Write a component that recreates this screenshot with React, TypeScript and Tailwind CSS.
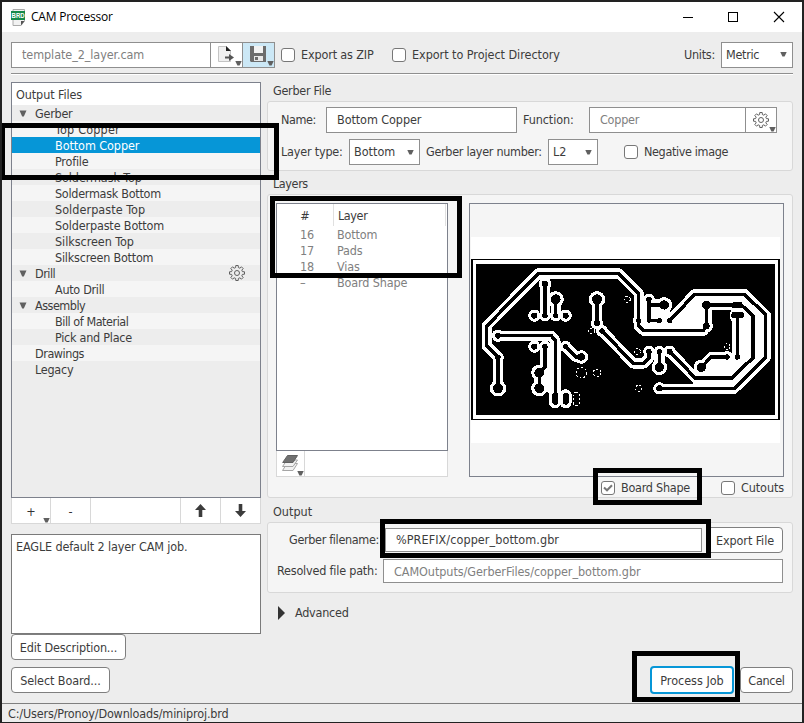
import React from "react";

const FONT = "font-['DejaVu_Sans_Condensed','DejaVu_Sans',sans-serif] [font-stretch:condensed]";

function Down({ className = "" }: { className?: string }) {
  return (
    <svg className={className} width="7" height="5" viewBox="0 0 7 5">
      <path d="M0.3 0H6.7L4.6 4.6H2.4Z" fill="#606060" />
    </svg>
  );
}

function Gear() {
  const pts: string[] = [];
  const teeth = 8;
  for (let i = 0; i < teeth; i++) {
    const a = (i * 2 * Math.PI) / teeth;
    const corners: [number, number][] = [[-0.25, 5.6], [-0.16, 7.6], [0.16, 7.6], [0.25, 5.6]];
    for (const [d, r] of corners) {
      pts.push(`${(8 + r * Math.sin(a + d)).toFixed(2)},${(8 - r * Math.cos(a + d)).toFixed(2)}`);
    }
  }
  return (
    <svg width="16" height="16" viewBox="0 0 16 16" fill="none" stroke="#606060" strokeWidth="1">
      <polygon points={pts.join(" ")} />
      <circle cx="8" cy="8" r="2.5" />
    </svg>
  );
}

function Check({ label, checked = false, tracking = "" }: { label: string; checked?: boolean; tracking?: string }) {
  return (
    <div className="flex items-center gap-[6px]">
      <div className="flex h-[14px] w-[14px] items-center justify-center rounded-[3px] border border-[#777] bg-white">
        {checked && (
          <svg width="10" height="8" viewBox="0 0 10 8">
            <path d="M1 3.5L4 6.3L9 1.2" fill="none" stroke="#777" strokeWidth="2" />
          </svg>
        )}
      </div>
      <span className={tracking}>{label}</span>
    </div>
  );
}

function Select({ value, width }: { value: string; width: string }) {
  return (
    <div className={`flex h-[26px] items-center justify-between border border-[#8f8f8f] bg-white pr-[5px] pl-1 ${width}`}>
      <span>{value}</span>
      <Down />
    </div>
  );
}

function Triangle() {
  return (
    <svg width="8" height="7" viewBox="0 0 8 7">
      <path d="M0.5 0.5H7.5L4.8 6.5H3.2Z" fill="#606060" />
    </svg>
  );
}

type Row = { t: string; k?: string; head?: boolean; sel?: boolean; gear?: boolean; flat?: boolean };

const rows: Row[] = [
  { t: "Gerber", head: true, k: "tracking-[-0.25px]" },
  { t: "Top Copper", k: "tracking-[0.2px]" },
  { t: "Bottom Copper", sel: true, k: "tracking-[-0.08px]" },
  { t: "Profile", k: "tracking-[-0.2px]" },
  { t: "Soldermask Top", k: "tracking-[-0.1px]" },
  { t: "Soldermask Bottom", k: "tracking-[-0.28px]" },
  { t: "Solderpaste Top", k: "tracking-[0.05px]" },
  { t: "Solderpaste Bottom", k: "tracking-[-0.15px]" },
  { t: "Silkscreen Top", k: "tracking-[-0.05px]" },
  { t: "Silkscreen Bottom", k: "tracking-[-0.22px]" },
  { t: "Drill", head: true, gear: true, k: "tracking-[-0.5px]" },
  { t: "Auto Drill", k: "tracking-[-0.3px]" },
  { t: "Assembly", head: true, k: "tracking-[-0.5px]" },
  { t: "Bill of Material", k: "tracking-[-0.46px]" },
  { t: "Pick and Place", k: "tracking-[-0.26px]" },
  { t: "Drawings", flat: true, k: "tracking-[-0.45px]" },
  { t: "Legacy", flat: true, k: "tracking-[-0.25px]" },
];

function Tree() {
  return (
    <div className="h-[416px] w-[250px] border border-[#7d818c] bg-[#ededed]">
      <div className="flex h-[22px] items-center bg-white pt-[2px] pl-[4px] tracking-[-0.1px]">Output Files</div>
      {rows.map((r, i) => (
        <div
          key={r.t}
          className={`flex h-4 items-center ${r.sel ? "bg-[#0696d7] text-white" : i % 2 ? "bg-[#f5f5f5]" : "bg-[#ededed]"} ${r.head ? "pl-[7px]" : r.flat ? "pl-[23px]" : "pl-[43px]"}`}
        >
          {r.head && <span className="w-4"><Triangle /></span>}
          <span className={`relative top-px ${r.k ?? ""}`}>{r.t}</span>
          {r.gear && <span className="mr-[15px] ml-auto"><Gear /></span>}
        </div>
      ))}
    </div>
  );
}

const traces = [
  "M102 565V470L68 438V378L224 220H464L524 280V378L540 392H718L727 378V315H832L867 347V473L804 534H694L617 455",
  "M617 362L692 283H842L905 345V473L810 566H586",
  "M102 407H262L274 422V600",
  "M243 250V347",
  "M275 298V347",
  "M243 440V500L226 518V565",
  "M305 440L336 471H352",
  "M399 298V372",
  "M414 393L508 490H540L555 474V455",
  "M586 455V500",
  "M555 298V362H586",
  "M555 315H600",
  "M712 502L742 471H789",
  "M820 347V471",
];

const pads: [number, number, number][] = [
  [102, 565, 15], [102, 407, 9], [102, 472, 8], [243, 252, 10], [275, 298, 15], [211, 347, 9],
  [243, 347, 8], [275, 347, 8], [305, 347, 9], [211, 440, 9], [243, 440, 8], [305, 440, 8],
  [352, 471, 11], [226, 518, 15], [226, 565, 15], [399, 298, 15], [399, 370, 9], [414, 393, 8],
  [524, 362, 8], [555, 298, 8], [601, 315, 14], [555, 362, 7], [586, 362, 8], [617, 362, 8],
  [727, 315, 13], [727, 378, 10], [555, 455, 8], [586, 455, 8], [617, 455, 9], [586, 502, 14],
  [586, 565, 9], [712, 502, 14], [789, 471, 8], [820, 471, 8],
];

const vias: [number, number, number][] = [
  [352, 518, 16], [399, 518, 11], [524, 565, 10], [520, 455, 9], [789, 440, 9], [383, 393, 9], [490, 298, 9],
];

function Board() {
  return (
    <svg width="309" height="206" viewBox="21 111 927 618" className="block" shapeRendering="crispEdges">
      <rect x="21" y="111" width="927" height="618" fill="#fff" />
      <rect x="21" y="177" width="927" height="483" fill="#000" />
      <rect x="27" y="180" width="915" height="477" fill="#fff" />
      <rect x="36" y="192" width="897" height="453" fill="#000" />
      <path d="M617 362L692 283H842L905 345V473L810 566H700L617 455L555 392H524V298H600L620 340Z" fill="#fff" />
      <path d="M540 405H720L742 388V330H800V350L808 362V460H740L705 490L698 510L685 512L630 450H550Z" fill="#000" />
      <path d="M640 284L612 298L628 325L640 325L680 284Z" fill="#000" />
      <path d="M243 440H275V600L245 570L226 565L243 500Z" fill="#fff" />
      <path d="M708 502L742 475H867V534H700Z" fill="#fff" />
      <g fill="none" stroke="#fff" strokeWidth="31" strokeLinejoin="round">
        {traces.map((d) => <path key={d} d={d} />)}
      </g>
      {pads.map(([x, y, r]) => <circle key={`${x}-${y}`} cx={x} cy={y} r={r + 9.5} fill="#fff" />)}
      <rect x="255" y="570" width="36" height="55" rx="17" fill="#fff" />
      <rect x="287" y="568" width="36" height="57" rx="17" fill="#fff" />
      <rect x="797" y="327" width="46" height="40" rx="18" fill="#fff" />
      <g fill="none" stroke="#000" strokeWidth="10.5">
        {traces.map((d) => <path key={d} d={d} />)}
      </g>
      {pads.map(([x, y, r]) => <circle key={`${x}-${y}`} cx={x} cy={y} r={r} fill="#000" />)}
      <rect x="265" y="577" width="18" height="37" rx="8" fill="#000" />
      <rect x="297" y="578" width="17" height="36" rx="8" fill="#000" />
      <rect x="802" y="336" width="38" height="19" rx="9" fill="#000" />
      <rect x="803" y="307" width="33" height="17" rx="5" fill="#000" />
      <g fill="none" stroke="#fff" strokeWidth="3" strokeDasharray="6 6">
        {vias.map(([x, y, r]) => <circle key={`${x}-${y}`} cx={x} cy={y} r={r} />)}
        <rect x="327" y="577" width="20" height="39" rx="9" />
      </g>
    </svg>
  );
}

const btn = "flex h-[26px] items-center justify-center rounded-[4px] border border-[#7f7f7f] bg-white pt-px";
const field = "flex items-center border border-[#8f8f8f] bg-white pl-[10px]";
const group = "rounded-[3px] border border-[#d8d8d8] bg-[#f5f5f5]";

export default function App() {
  return (
    <div className={`relative flex h-[723px] w-[804px] flex-col overflow-hidden border-2 border-b border-[#222] bg-[#ededed] text-[12.5px] leading-4 whitespace-nowrap text-[#3c3c3c] ${FONT}`}>
      <div className="flex h-[30px] shrink-0 items-center bg-white pr-[16px] pl-[9px] text-black">
        <svg width="15" height="17" viewBox="0 0 15 17">
          <path d="M2 .5H13.5V12L10 16.5H2Z" fill="#f2f2f2" stroke="#aaa" />
          <path d="M13.5 12L10 16.5V12Z" fill="#555" />
          <rect y="2" width="14" height="9" fill="#168a4a" />
          <text x="0.6" y="9" fontSize="7" fontWeight="700" fill="#fff" textLength="13" lengthAdjust="spacingAndGlyphs" fontFamily="Liberation Sans, sans-serif">BRD</text>
        </svg>
        <span className="ml-[5px] font-['Open_Sans',sans-serif] text-[12px] tracking-[-0.22px] [font-stretch:normal]">CAM Processor</span>
        <svg className="ml-auto" width="103" height="12" viewBox="0 0 103 12" fill="none" stroke="#000">
          <path d="M0 6.5H10" />
          <rect x="45.5" y="1.5" width="9" height="9" />
          <path d="M91 1L101 11M101 1L91 11" strokeWidth="1.1" />
        </svg>
      </div>

      <div className="flex h-[41px] shrink-0 items-center px-[9px] pt-1">
        <div className="flex h-[26px] w-[264px] border border-[#8f8f8f] bg-white">
          <div className="flex w-[199px] items-center border-r border-[#8f8f8f] pl-[10px] tracking-[-0.08px] text-[#808080]">template_2_layer.cam</div>
          <div className="relative w-[32px] border-r border-[#8f8f8f]">
            <svg className="absolute top-[3px] left-[7px]" width="17" height="17" viewBox="0 0 17 17">
              <path d="M.5 .5H8.5L12.5 4.5V15.5H.5Z" fill="#f0f0f0" stroke="#c4c4c4" />
              <path d="M8 0L13 5H8Z" fill="#222" />
              <path d="M7 11.5H12" stroke="#555" strokeWidth="2" />
              <path d="M11 8L16 11.5L11 15Z" fill="#555" />
            </svg>
            <Down className="absolute right-0 bottom-px" />
          </div>
          <div className="relative flex-1 bg-[#cce8f6]">
            <svg className="absolute top-[3px] left-[7px]" width="16" height="16" viewBox="0 0 16 16">
              <path d="M0 0H16V16H1L0 15Z" fill="#6c6c6c" />
              <rect x="4" y="0" width="9" height="7" fill="#f2f2f2" />
              <rect x="4" y="10" width="9" height="5" fill="#e8e8e8" />
              <rect x="5" y="11" width="3" height="3" fill="#6c6c6c" />
            </svg>
            <Down className="absolute right-0 bottom-px" />
          </div>
        </div>
        <div className="ml-[6px] w-[93px]"><Check label="Export as ZIP" tracking="tracking-[-0.15px]" /></div>
        <div className="ml-[18px]"><Check label="Export to Project Directory" tracking="tracking-[-0.04px]" /></div>
        <span className="mr-[6px] ml-auto tracking-[-0.25px]">Units:</span>
        <Select value="Metric" width="w-[72px] tracking-[-0.3px]" />
      </div>
      <div className="mx-[9px] h-[2px] shrink-0 border-b border-white bg-[#8f8f8f]" />

      <div className="flex flex-1 px-[9px]">
        <div className="mt-[7px] flex w-[250px] flex-col items-start">
          <Tree />
          <div className="flex h-[26px] w-[250px] border border-t-0 border-[#d8d8d8] bg-white text-[#333]">
            <div className="relative flex w-[39px] items-center justify-center border-r border-[#d8d8d8] pt-[2px]">+<Down className="absolute right-0 bottom-0" /></div>
            <div className="flex w-[40px] items-center justify-center border-r border-[#d8d8d8] pt-[2px]">-</div>
            <div className="flex-1" />
            <div className="flex w-[41px] items-center justify-center border-x border-[#d8d8d8]">
              <svg width="11" height="13" viewBox="0 0 11 13"><path d="M5.5 0L11 6H7.3V13H3.7V6H0Z" fill="#3c3c3c" /></svg>
            </div>
            <div className="flex w-[39px] items-center justify-center">
              <svg width="11" height="13" viewBox="0 0 11 13"><path d="M5.5 13L11 7H7.3V0H3.7V7H0Z" fill="#3c3c3c" /></svg>
            </div>
          </div>
          <div className="mt-[10px] h-[100px] w-[250px] border border-[#7a7a7a] bg-white pt-[4px] pl-[4px] tracking-[-0.13px]">EAGLE default 2 layer CAM job.</div>
          <div className={`${btn} w-[115px] tracking-[-0.15px]`}>Edit Description...</div>
          <div className={`${btn} mt-[7px] w-[99px] tracking-[-0.1px]`}>Select Board...</div>
        </div>

        <div className="ml-[6px] flex w-[526px] flex-col pt-[7px]">
          <div className="h-[19px] pt-px pl-[6px] tracking-[-0.28px]">Gerber File</div>
          <div className={`${group} h-[70px] pt-[5px] pl-[13px]`}>
            <div className="flex items-center">
              <span className="w-[45px] tracking-[-0.4px]">Name:</span>
              <div className={`${field} h-[26px] w-[191px] tracking-[-0.08px]`}>Bottom Copper</div>
              <span className="ml-[6px] w-[66px] tracking-[-0.1px]">Function:</span>
              <div className={`${field} h-[26px] w-[188px] text-[#808080]`}>
                <span className="flex-1 tracking-[-0.25px]">Copper</span>
                <div className="relative flex h-full w-[31px] items-center justify-center border-l border-[#8f8f8f]">
                  <Gear />
                  <Down className="absolute right-0 bottom-0" />
                </div>
              </div>
            </div>
            <div className="mt-[6px] flex items-center">
              <span className="w-[68px] tracking-[-0.2px]">Layer type:</span>
              <Select value="Bottom" width="w-[71px]" />
              <span className="ml-[6px] w-[122px] tracking-[-0.3px]">Gerber layer number:</span>
              <Select value="L2" width="w-[50px]" />
              <div className="ml-[26px]"><Check label="Negative image" tracking="tracking-[-0.36px]" /></div>
            </div>
          </div>

          <div className="h-[23px] pt-[5px] pl-[6px] tracking-[-0.4px]">Layers</div>
          <div className={`${group} flex h-[304px] pt-[8px] pl-[8px]`}>
            <div className="w-[172px]">
              <div className="h-[248px] border border-[#7d818c] bg-white text-[#808080]">
                <div className="mb-px flex h-[22px] text-[#3c3c3c]">
                  <div className="w-[57px] border-r border-[#e0e0e0] pt-[4px] text-center">#</div>
                  <div className="mr-px flex-1 border-r border-[#e0e0e0] pt-[4px] pl-[4px] tracking-[-0.4px]">Layer</div>
                </div>
                {[["16", "Bottom"], ["17", "Pads"], ["18", "Vias"], ["–", "Board Shape"]].map(([n, l]) => (
                  <div key={l} className="flex h-4 tracking-[-0.15px]"><span className="w-[37px] pl-[23px]">{n}</span><span className="pl-[23px]">{l}</span></div>
                ))}
              </div>
              <div className="flex h-[26px] border border-t-0 border-[#d8d8d8] bg-white">
                <div className="relative w-[28px] border-r border-[#d8d8d8]">
                  <svg className="absolute top-[4px] left-[5px]" width="17" height="17" viewBox="0 0 17 17" stroke="#a5a5a5">
                    <path d="M5 8.5H15.5L11 15.5H.5Z" fill="#f2f2f2" />
                    <path d="M5 5H15.5L11 11.5H.5Z" fill="#f2f2f2" />
                    <path d="M5.5 .5H15.5L11 7.5H.7Z" fill="#707070" stroke="#606060" />
                  </svg>
                  <Down className="absolute right-0 bottom-0" />
                </div>
              </div>
            </div>
            <div className="ml-[21px] w-[315px]">
              <div className="h-[274px] border border-[#7d818c] pt-[33px] pl-px"><Board /></div>
              <div className="mt-[3px] flex justify-end gap-[31px]">
                <Check label="Board Shape" checked tracking="tracking-[-0.25px]" />
                <Check label="Cutouts" tracking="tracking-[-0.1px]" />
              </div>
            </div>
          </div>

          <div className="h-[24px] pt-[6px] pl-[6px]">Output</div>
          <div className={`${group} h-[71px] pt-[4px] pl-[9px]`}>
            <div className="flex items-center">
              <span className="w-[108px] pl-[12px] tracking-[-0.33px]">Gerber filename:</span>
              <div className={`${field} h-[24px] w-[317px] tracking-[0.07px]`}>%PREFIX/copper_bottom.gbr</div>
              <div className={`${btn} ml-[5px] w-[76px] tracking-[-0.1px]`}>Export File</div>
            </div>
            <div className="mt-[6px] flex items-center">
              <span className="w-[106px] tracking-[-0.2px]">Resolved file path:</span>
              <div className={`${field} h-[24px] w-[400px] pt-px tracking-[-0.06px] text-[#808080]`}>CAMOutputs/GerberFiles/copper_bottom.gbr</div>
            </div>
          </div>

          <div className="mt-[12px] flex items-center pl-[11px]">
            <svg width="7" height="14" viewBox="0 0 7 14"><path d="M0 0L7 7L0 14Z" fill="#333" /></svg>
            <span className="ml-[10px] tracking-[-0.25px]">Advanced</span>
          </div>
          <div className="mt-[45px] flex items-center justify-end gap-[6px]">
            <div className="flex h-[28px] w-[84px] items-center justify-center rounded-[4px] border-2 border-[#0696d7] bg-white pt-px">Process Job</div>
            <div className={`${btn} w-[53px] tracking-[-0.3px]`}>Cancel</div>
          </div>
        </div>
      </div>
      <div className="flex h-[19px] shrink-0 items-center border-t border-[#7f7f7f] pt-[2px] pl-[6px] tracking-[-0.16px]">C:/Users/Pronoy/Downloads/miniproj.brd</div>

      <div className="absolute top-[121px] -left-[2px] h-[57px] w-[279px] border-5 border-black" />
      <div className="absolute top-[194px] left-[268px] h-[82px] w-[192px] border-5 border-black" />
      <div className="absolute top-[466px] left-[591px] h-[37px] w-[109px] border-5 border-black" />
      <div className="absolute top-[517px] left-[378px] h-[39px] w-[331px] border-5 border-black" />
      <div className="absolute top-[649px] left-[630px] h-[51px] w-[108px] border-5 border-black" />
    </div>
  );
}
